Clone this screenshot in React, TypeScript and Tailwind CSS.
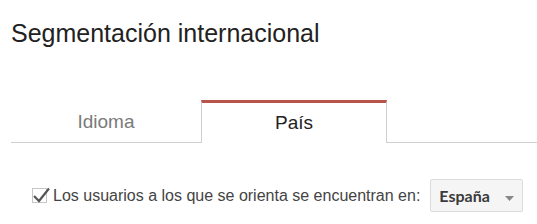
import { useState } from 'react'

export default function App() {
  const [tab, setTab] = useState('pais')
  const [checked, setChecked] = useState(true)

  const active = 'h-[43px] w-[186px] border-x border-t-[3px] border-x-[#d0d0d0] border-t-[#b9544b] bg-white text-[19px] text-[#222]'
  const idle = 'h-[43px] border-b border-[#cfcfcf] pt-[3px] text-[19px] text-[#7a7a7a]'

  return (
    <div className="h-[224px] w-[537px] overflow-hidden bg-white font-['Liberation_Sans',Arial,sans-serif] text-[#222]">
      <h1 className="pl-[11px] pt-[18px] text-[25px] leading-[30px] font-normal text-[#222]">Segmentación internacional</h1>

      <div className="mt-[52px] flex pl-[11px]">
        <button onClick={() => setTab('idioma')} className={tab === 'idioma' ? active : idle + ' w-[190px]'}>
          Idioma
        </button>
        <button onClick={() => setTab('pais')} className={tab === 'pais' ? active : idle + ' w-[186px]'}>
          País
        </button>
        <div className="h-[43px] flex-1 border-b border-[#cfcfcf]" />
      </div>

      <div className="mt-[36px] flex items-center pl-[32px]">
        <label className="flex items-center text-[16px] text-[#444]">
          <span
            onClick={() => setChecked(!checked)}
            className="relative mr-[6px] h-[15px] w-[15px] border border-[#c6c6c6] bg-white"
          >
            {checked ? (
              <svg width="20" height="20" viewBox="0 0 20 20" className="absolute left-[-1px] top-[-3px]">
                <path d="M2 10 L7 15 L17 2.5" fill="none" stroke="#555" strokeWidth="2.2" />
              </svg>
            ) : null}
          </span>
          Los usuarios a los que se orienta se encuentran en:
        </label>
        <button className="ml-[10px] flex h-[33px] w-[93px] items-center justify-between rounded-[2px] border border-[#dcdcdc] bg-[#f5f5f5] pl-[8px] pr-[8px] font-['Lato',sans-serif] text-[16px] font-bold text-[#3a3a3a]">
          España
          <svg width="9" height="5" viewBox="0 0 9 5" className="mt-[5px]">
            <path d="M0 0 L9 0 L4.5 5 Z" fill="#888" />
          </svg>
        </button>
      </div>
    </div>
  )
}
